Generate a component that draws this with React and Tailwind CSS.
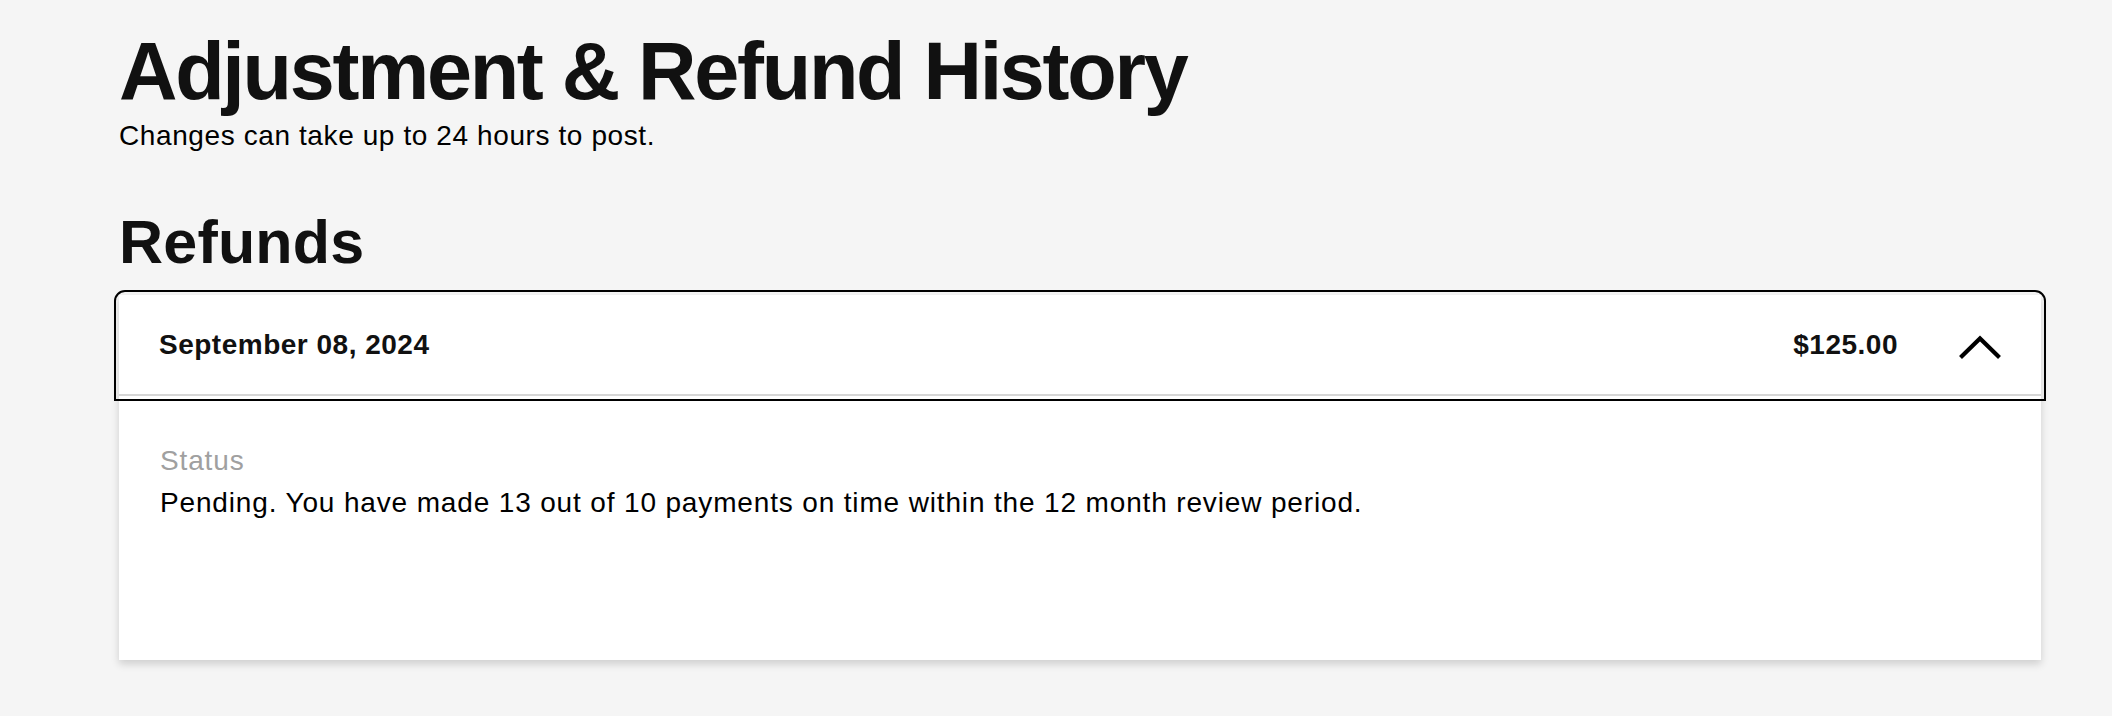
import React, { useState } from 'react';

const ChevronUp = () => (
  <svg width="44" height="25" viewBox="0 0 44 25" fill="none" className="mt-[6px] shrink-0">
    <polyline points="2.5,22.5 22,3.5 41.5,22.5" stroke="#000" strokeWidth="4.2" strokeLinejoin="miter" />
  </svg>
);

const RefundRow = ({ date, amount, status }) => {
  const [open, setOpen] = useState(true);

  return (
    <div className="bg-white shadow-[0_4px_8px_rgba(0,0,0,0.16)]">
      <button
        type="button"
        onClick={() => setOpen(!open)}
        className="w-full h-[101px] flex items-center pl-[40px] pr-[39px] border-b-2 border-[#d6d6d6] rounded-t-[6px] outline-solid outline-2 outline-black outline-offset-[3px] text-left"
      >
        <span className="flex-1 text-[28px] leading-[42px] font-bold tracking-[0.5px]">{date}</span>
        <span className="text-[28px] leading-[42px] font-bold tracking-[0.5px] mr-[60px]">{amount}</span>
        <ChevronUp />
      </button>
      {open && (
        <div className="pl-[41px] pt-[43px] pb-[136px]">
          <p className="text-[28px] leading-[43px] tracking-[0.85px] text-[#a0a0a0]">Status</p>
          <p className="text-[28px] leading-[42px] tracking-[0.85px] text-black">{status}</p>
        </div>
      )}
    </div>
  );
};

export default function App() {
  return (
    <div className="min-h-screen bg-[#f5f5f5] text-[#111] font-['Liberation_Sans',Arial,sans-serif]">
      <div className="pl-[119px] pr-[71px] pt-[31px] pb-[56px]">
        <h1 className="text-[81px] leading-[81px] font-bold tracking-[-2.3px]">Adjustment &amp; Refund History</h1>
        <p className="mt-[3px] text-[28px] leading-[42px] tracking-[0.6px] text-black">Changes can take up to 24 hours to post.</p>
        <h2 className="mt-[55px] text-[61px] leading-[61px] font-bold tracking-[0.2px]">Refunds</h2>
        <div className="mt-[22px]">
          <RefundRow
            date="September 08, 2024"
            amount="$125.00"
            status="Pending. You have made 13 out of 10 payments on time within the 12 month review period."
          />
        </div>
      </div>
    </div>
  );
}
